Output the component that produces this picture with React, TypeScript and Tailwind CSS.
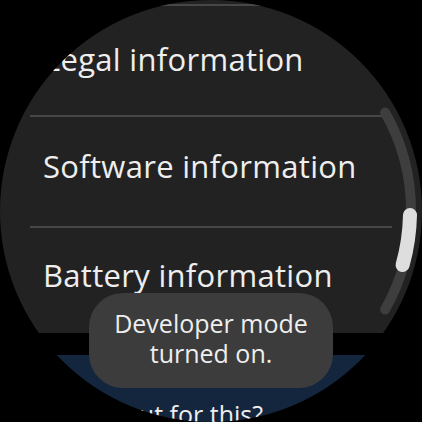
import React from 'react';

interface Row {
  label: string;
  className: string;
}

const rows: Row[] = [
  { label: 'Legal information', className: 'h-[109px] pt-[35px] pl-[44px]' },
  { label: 'Software information', className: 'h-[109px] pt-[31px] pl-[43px]' },
  { label: 'Battery information', className: 'h-[105px] pt-[29px] pl-[43px]' },
];

const Divider = () => <div className="mx-[30px] h-[2px] bg-[#474747]" />;

// curved scroll indicator along the right edge of the round screen
const ScrollArc = () => (
  <svg className="absolute inset-0" width="422" height="422" viewBox="0 0 422 422">
    <path d="M385.1 112.5 A200 200 0 0 1 385.1 309.5" fill="none" stroke="#3e3e3e" strokeWidth="10" strokeLinecap="round" />
    <path d="M410 215 A199 199 0 0 1 402.6 265" fill="none" stroke="#dedede" strokeWidth="14" strokeLinecap="round" />
  </svg>
);

export default function App() {
  return (
    <div className="w-[422px] h-[422px] bg-black font-['Open_Sans',sans-serif]">
      <div className="relative w-full h-full rounded-full overflow-hidden bg-black">
        <div className="flex flex-col h-full">
          {/* list card */}
          <div className="bg-[#222222] pt-[4px]">
            {rows.map((row) => (
              <div key={row.label}>
                <Divider />
                <div className={`${row.className} text-[31px] leading-[36px] tracking-[0.3px] text-[#eeeeee] whitespace-nowrap`}>
                  {row.label}
                </div>
              </div>
            ))}
          </div>

          <div className="h-[22px] shrink-0" />

          {/* next section */}
          <div className="flex-1 bg-[#14263e] pt-[44px] flex justify-end pr-[159px]">
            <span className="text-[25px] leading-[30px] text-[#eeeeee] whitespace-nowrap">Need a shortcut for this?</span>
          </div>
        </div>

        <ScrollArc />

        {/* toast */}
        <div className="absolute left-[89px] top-[293px] w-[244px] h-[95px] rounded-[34px] bg-[#3c3c3c] pt-[15px] text-center text-[25px] leading-[30px] text-[#eeeeee]">
          <div>Developer mode</div>
          <div>turned on.</div>
        </div>
      </div>
    </div>
  );
}
